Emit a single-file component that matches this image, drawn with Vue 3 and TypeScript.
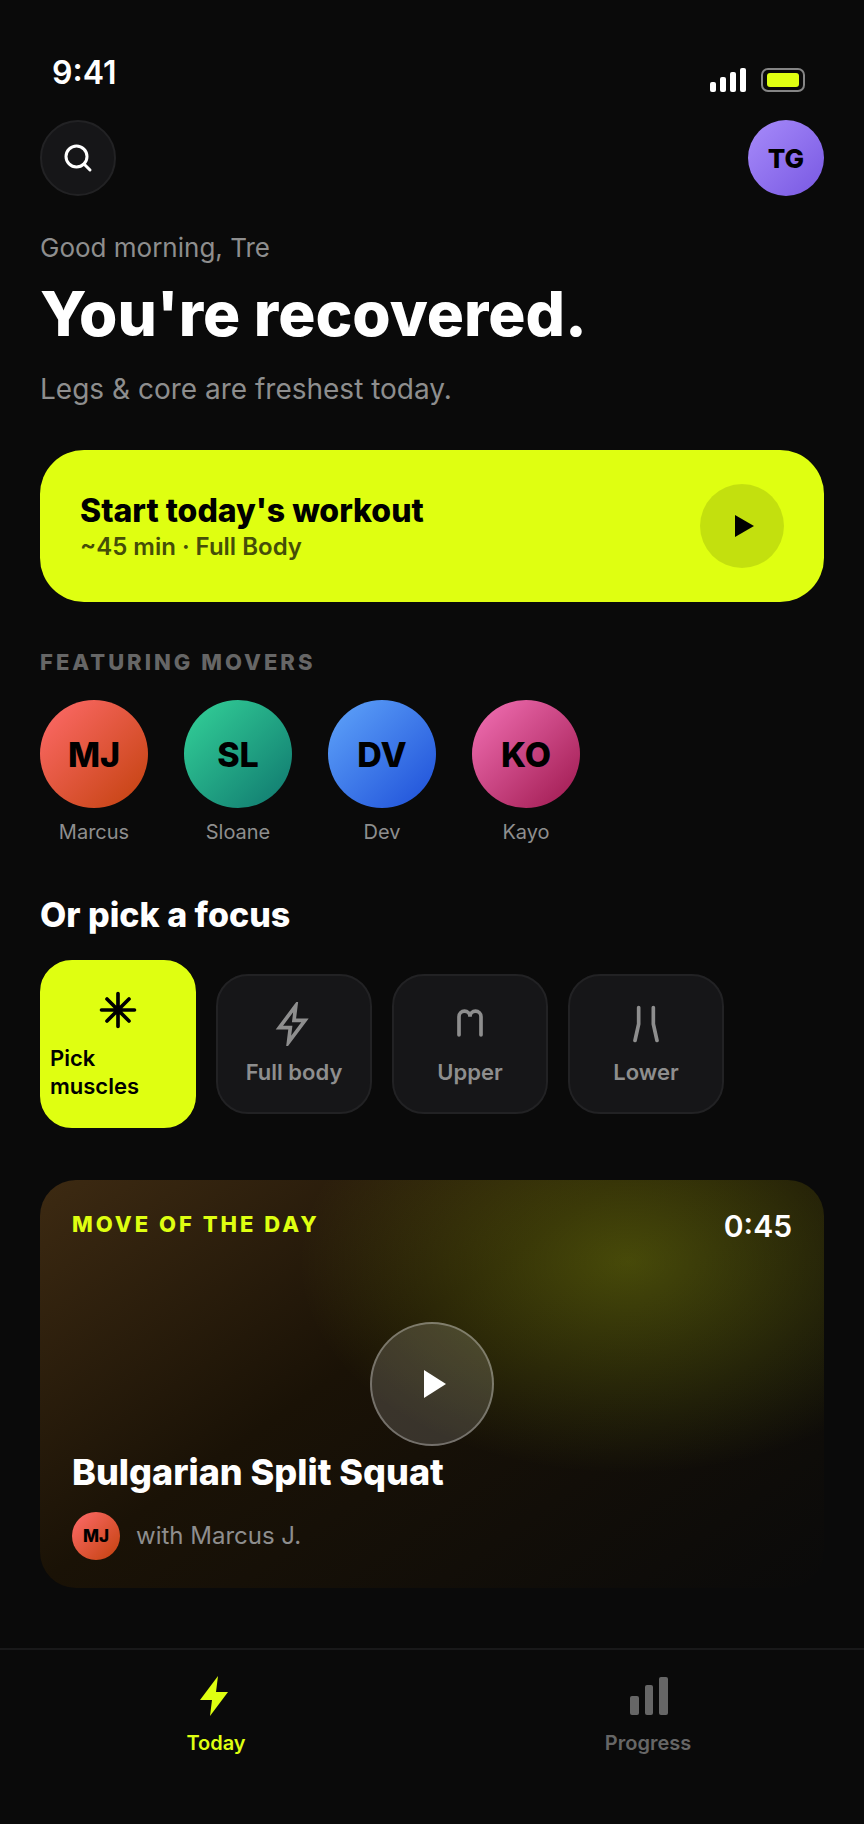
<script setup lang="ts">
interface Mover {
  initials: string
  name: string
  tone: string
}

interface Focus {
  label: string
  icon: string
  active?: boolean
}

const movers: Mover[] = [
  { initials: 'MJ', name: 'Marcus', tone: 'coral' },
  { initials: 'SL', name: 'Sloane', tone: 'green' },
  { initials: 'DV', name: 'Dev', tone: 'blue' },
  { initials: 'KO', name: 'Kayo', tone: 'pink' },
]

const focuses: Focus[] = [
  { label: 'Pick muscles', icon: 'M12 3v18M3 12h18M6 6l12 12M18 6L6 18', active: true },
  { label: 'Full body', icon: 'M13 2L4 14h6l-1 8 9-12h-6l1-8z' },
  { label: 'Upper', icon: 'M6 18V8a3 3 0 0 1 6 0 3 3 0 0 1 6 0v10' },
  { label: 'Lower', icon: 'M8 3v9l-2 9M16 3v9l2 9' },
]
</script>

<template>
  <div class="screen">
    <div class="status">
      <span class="clock">9:41</span>
      <div class="indicators">
        <svg class="signal" viewBox="0 0 36 24" aria-hidden="true">
          <rect x="0" y="14" width="6" height="10" rx="2" />
          <rect x="10" y="9" width="6" height="15" rx="2" />
          <rect x="20" y="4" width="6" height="20" rx="2" />
          <rect x="30" y="0" width="6" height="24" rx="2" />
        </svg>
        <span class="battery"><span class="charge"></span></span>
      </div>
    </div>

    <main class="content">
      <header class="top">
        <button class="search" type="button" aria-label="Search">
          <svg viewBox="0 0 24 24" aria-hidden="true">
            <circle cx="11" cy="11" r="7" />
            <path d="M20 20l-3.5-3.5" />
          </svg>
        </button>
        <button class="avatar profile violet" type="button">TG</button>
      </header>

      <p class="greeting">Good morning, Tre</p>
      <h1>You're recovered.</h1>
      <p class="summary">Legs &amp; core are freshest today.</p>

      <button class="start" type="button">
        <span class="start-text">
          <span class="start-title">Start today's workout</span>
          <span class="start-meta">~45 min · Full Body</span>
        </span>
        <span class="start-play">
          <svg viewBox="0 0 20 22" aria-hidden="true"><path d="M0 0l19 11L0 22z" /></svg>
        </span>
      </button>

      <h2 class="eyebrow">FEATURING MOVERS</h2>
      <div class="movers">
        <button v-for="mover in movers" :key="mover.name" class="mover" type="button">
          <span class="avatar large" :class="mover.tone">{{ mover.initials }}</span>
          <span class="mover-name">{{ mover.name }}</span>
        </button>
      </div>

      <h2 class="section-title">Or pick a focus</h2>
      <div class="focuses">
        <button
          v-for="focus in focuses"
          :key="focus.label"
          class="focus"
          :class="{ active: focus.active }"
          type="button"
        >
          <svg viewBox="0 0 24 24" aria-hidden="true"><path :d="focus.icon" /></svg>
          <span>{{ focus.label }}</span>
        </button>
      </div>

      <article class="move">
        <div class="move-head">
          <span class="move-label">MOVE OF THE DAY</span>
          <span class="move-time">0:45</span>
        </div>
        <button class="move-play" type="button" aria-label="Play">
          <svg viewBox="0 0 22 28" aria-hidden="true"><path d="M0 0l22 14L0 28z" /></svg>
        </button>
        <div class="move-foot">
          <h3>Bulgarian Split Squat</h3>
          <div class="coach">
            <span class="avatar small coral">MJ</span>
            <span>with Marcus J.</span>
          </div>
        </div>
      </article>
    </main>

    <nav class="tabs">
      <a class="tab current" href="#today">
        <svg viewBox="0 0 24 24" aria-hidden="true"><path d="M13 2L4 14h6l-1 8 9-12h-6l1-8z" /></svg>
        <span>Today</span>
      </a>
      <a class="tab" href="#progress">
        <svg viewBox="0 0 48 48" aria-hidden="true">
          <rect x="6" y="24" width="9" height="19" rx="2" />
          <rect x="21" y="13" width="8" height="30" rx="2" />
          <rect x="35" y="5" width="9" height="38" rx="2" />
        </svg>
        <span>Progress</span>
      </a>
    </nav>
  </div>
</template>

<style>
body {
  background: #0a0a0a;
}
</style>

<style scoped>
.screen {
  display: flex;
  flex-direction: column;
  min-height: 100vh;
  background: #0a0a0a;
  color: #fff;
  font-family: Inter, "Liberation Sans", sans-serif;
}

.screen * {
  box-sizing: border-box;
}

h1,
h2,
h3,
p {
  margin: 0;
}

button {
  margin: 0;
  padding: 0;
  border: 0;
  background: none;
  color: inherit;
  font: inherit;
  cursor: pointer;
}

a {
  color: inherit;
  text-decoration: none;
}

svg {
  display: block;
}

.status {
  display: flex;
  align-items: flex-end;
  justify-content: space-between;
  padding: 54px 59px 28px 52px;
}

.clock {
  font-size: 32px;
  line-height: 38px;
  font-weight: 600;
}

.indicators {
  display: flex;
  align-items: center;
  gap: 15px;
}

.signal {
  width: 36px;
  height: 24px;
  fill: #fff;
}

.battery {
  width: 44px;
  height: 24px;
  padding: 3px 4px;
  border: 2px solid #858585;
  border-radius: 7px;
}

.charge {
  display: block;
  width: 32px;
  height: 14px;
  border-radius: 3px;
  background: #dfff11;
}

.content {
  padding: 0 40px;
}

.top {
  display: flex;
  align-items: center;
  justify-content: space-between;
}

.search {
  display: grid;
  place-items: center;
  width: 76px;
  height: 76px;
  border: 2px solid #222224;
  border-radius: 50%;
  background: #161618;
}

.search svg {
  width: 36px;
  height: 36px;
  fill: none;
  stroke: #fff;
  stroke-width: 2;
  stroke-linecap: round;
}

.avatar {
  display: grid;
  place-items: center;
  flex: none;
  border-radius: 50%;
  color: #000;
  font-weight: 800;
}

.profile {
  width: 76px;
  height: 76px;
  font-size: 26px;
}

.large {
  width: 108px;
  height: 108px;
  font-size: 34px;
}

.small {
  width: 48px;
  height: 48px;
  font-size: 17px;
}

.violet {
  background: linear-gradient(135deg, #a78bfa, #7858e2);
}

.coral {
  background: linear-gradient(135deg, #ff6b6b, #c2410c);
}

.green {
  background: linear-gradient(135deg, #34d399, #0f766e);
}

.blue {
  background: linear-gradient(135deg, #60a5fa, #1d4ed8);
}

.pink {
  background: linear-gradient(135deg, #f472b6, #9d174d);
}

.greeting {
  margin-top: 34px;
  color: #8e8e8e;
  font-size: 26px;
  line-height: 36px;
}

h1 {
  margin-top: 12px;
  font-size: 62px;
  line-height: 72px;
  font-weight: 800;
}

.summary {
  margin-top: 21px;
  color: #8e8e8e;
  font-size: 28px;
  line-height: 36px;
}

.start {
  display: flex;
  align-items: center;
  justify-content: space-between;
  width: 100%;
  margin-top: 43px;
  padding: 34px 40px;
  border-radius: 44px;
  background: #dfff11;
  color: #000;
  text-align: left;
}

.start-text {
  display: flex;
  flex-direction: column;
}

.start-title {
  font-size: 32px;
  line-height: 42px;
  font-weight: 800;
}

.start-meta {
  color: #454e08;
  font-size: 24px;
  line-height: 30px;
  font-weight: 600;
}

.start-play {
  display: grid;
  place-items: center;
  width: 84px;
  height: 84px;
  padding-left: 6px;
  border-radius: 50%;
  background: rgba(0, 0, 0, 0.12);
}

.start-play svg {
  width: 20px;
  height: 22px;
}

.eyebrow {
  margin-top: 46px;
  color: #666;
  font-size: 22px;
  line-height: 28px;
  font-weight: 800;
  letter-spacing: 3px;
}

.movers {
  display: flex;
  gap: 36px;
  margin-top: 24px;
}

.mover {
  display: flex;
  flex-direction: column;
  align-items: center;
  gap: 12px;
}

.mover-name {
  color: #8e8e8e;
  font-size: 20px;
  line-height: 24px;
}

.section-title {
  margin-top: 50px;
  font-size: 34px;
  line-height: 42px;
  font-weight: 800;
}

.focuses {
  display: flex;
  align-items: center;
  gap: 20px;
  margin-top: 24px;
}

.focus {
  display: flex;
  flex-direction: column;
  align-items: center;
  gap: 12px;
  width: 156px;
  padding: 26px 8px;
  border: 2px solid #222224;
  border-radius: 32px;
  background: #161618;
  color: #8e8e8e;
  font-size: 22px;
  line-height: 28px;
  font-weight: 600;
  text-align: left;
}

.focus.active {
  border-color: #dfff11;
  background: #dfff11;
  color: #000;
}

.focus svg {
  width: 44px;
  height: 44px;
  fill: none;
  stroke: currentColor;
  stroke-width: 2;
  stroke-linecap: round;
}

.move {
  position: relative;
  display: flex;
  flex-direction: column;
  justify-content: space-between;
  min-height: 408px;
  margin-top: 52px;
  padding: 28px 32px;
  border-radius: 36px;
  background:
    radial-gradient(42% 52% at 75% 20%, rgba(223, 255, 17, 0.24), transparent),
    linear-gradient(145deg, #3d2a12, #1a1206 42%, #0a0a0a);
}

.move-head {
  display: flex;
  align-items: flex-start;
  justify-content: space-between;
}

.move-label {
  color: #dfff11;
  font-size: 22px;
  line-height: 32px;
  font-weight: 800;
  letter-spacing: 3px;
}

.move-time {
  font-size: 30px;
  line-height: 36px;
  font-weight: 600;
}

.move-play {
  position: absolute;
  inset: 0;
  display: grid;
  place-items: center;
  width: 124px;
  height: 124px;
  margin: auto;
  padding-left: 6px;
  border: 2px solid rgba(255, 255, 255, 0.3);
  border-radius: 50%;
  background: rgba(255, 255, 255, 0.15);
}

.move-play svg {
  width: 22px;
  height: 28px;
  fill: #fff;
}

h3 {
  font-size: 36px;
  line-height: 44px;
  font-weight: 800;
}

.coach {
  display: flex;
  align-items: center;
  gap: 16px;
  margin-top: 18px;
  color: #8e8e8e;
  font-size: 24px;
  line-height: 32px;
}

.tabs {
  display: flex;
  margin-top: auto;
  padding: 22px 0 68px;
  border-top: 2px solid #19191a;
}

.tab {
  display: flex;
  flex: 1;
  flex-direction: column;
  align-items: center;
  gap: 10px;
  color: #666;
  font-size: 20px;
  line-height: 26px;
  font-weight: 600;
}

.tab svg {
  width: 48px;
  height: 48px;
  fill: currentColor;
}

.tab.current {
  color: #dfff11;
}
</style>
